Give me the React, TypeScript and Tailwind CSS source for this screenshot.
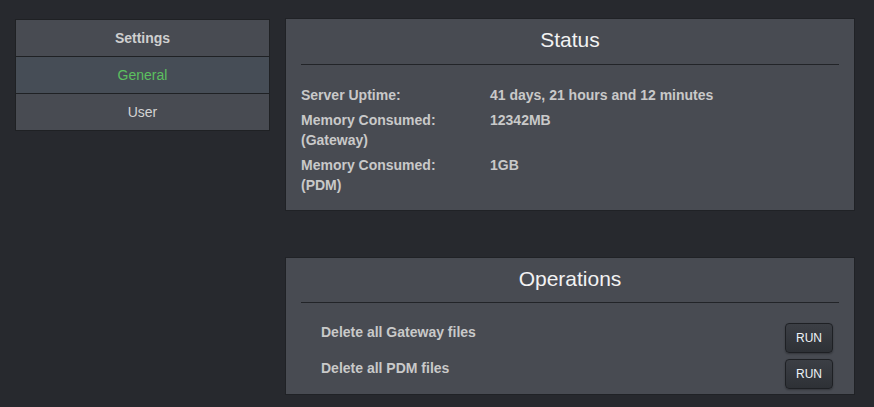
const stats = [
  { label: ["Server Uptime:"], value: "41 days, 21 hours and 12 minutes" },
  { label: ["Memory Consumed:", "(Gateway)"], value: "12342MB" },
  { label: ["Memory Consumed:", "(PDM)"], value: "1GB" },
];

const operations = ["Delete all Gateway files", "Delete all PDM files"];

function Panel({
  title,
  headerClass,
  children,
}: {
  title: string;
  headerClass: string;
  children: React.ReactNode;
}) {
  return (
    <div className="bg-[#484b52] border border-[#202226] px-[15px]">
      <div className={`${headerClass} border-b border-[#222428] flex items-center justify-center`}>
        <h2 className="text-[21px] text-[#f2f2f2]">{title}</h2>
      </div>
      {children}
    </div>
  );
}

export default function App() {
  return (
    <div className="min-h-screen bg-[#27292e] font-['Liberation_Sans',Arial,sans-serif] flex gap-[15px] pl-[15px] pr-[19px]">
      <nav className="w-[255px] mt-[19px] self-start border border-[#1f2124] bg-[#484b52] text-sm text-center">
        <div className="h-[36px] flex items-center justify-center font-bold text-[#cfcfcf]">Settings</div>
        <div className="h-[37px] border-t border-[#1f2124] bg-[#464d56] flex items-center justify-center text-[#5cc05f]">
          General
        </div>
        <div className="h-[37px] border-t border-[#1f2124] flex items-center justify-center text-[#d4d4d4]">
          User
        </div>
      </nav>

      <main className="flex-1 mt-[18px] flex flex-col gap-[46px]">
        <Panel title="Status" headerClass="h-[46px] pb-[3px]">
          <div className="pt-[20px] pb-[15px] flex flex-col gap-[5px] text-sm font-bold text-[#c9c9c9] leading-5">
            {stats.map((s) => (
              <div key={s.value} className="flex">
                <div className="w-[189px]">
                  {s.label.map((l) => (
                    <div key={l}>{l}</div>
                  ))}
                </div>
                <div>{s.value}</div>
              </div>
            ))}
          </div>
        </Panel>

        <Panel title="Operations" headerClass="h-[45px] pb-[3px]">
          <div className="pt-[20px] pb-[5px] pl-[20px] pr-[6px] flex flex-col gap-[6px] text-sm font-bold text-[#c9c9c9] leading-5">
            {operations.map((op) => (
              <div key={op} className="flex items-start justify-between">
                <span className="-mt-[1px]">{op}</span>
                <button className="w-[48px] h-[30px] rounded-[4px] border border-[#1e2024] bg-gradient-to-b from-[#3c3f45] to-[#2e3136] text-xs font-normal text-[#eef3f8] shadow-[0_1px_2px_rgba(0,0,0,0.3)]">
                  RUN
                </button>
              </div>
            ))}
          </div>
        </Panel>
      </main>
    </div>
  );
}
